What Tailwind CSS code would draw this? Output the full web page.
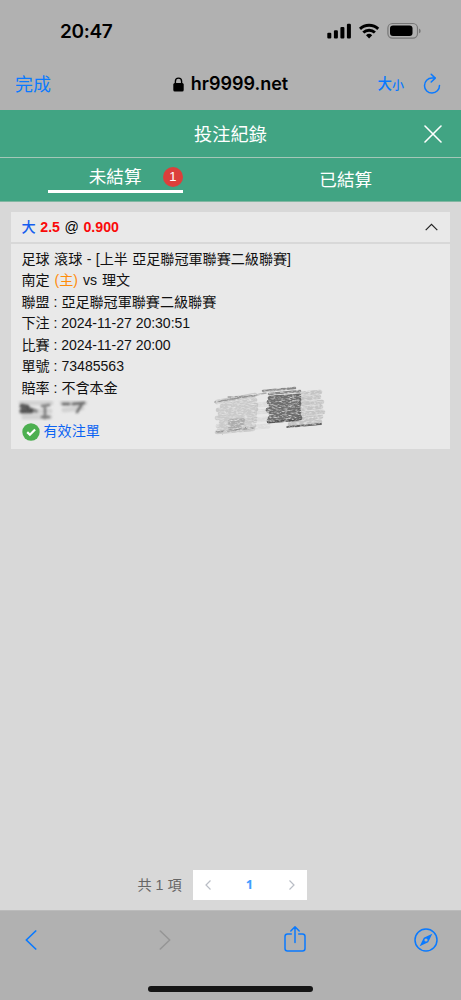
<!DOCTYPE html>
<html lang="zh-Hant">
<head>
<meta charset="utf-8">
<meta name="viewport" content="width=device-width, initial-scale=1">
<title>投注紀錄</title>
<script src="https://cdn.jsdelivr.net/npm/@tailwindcss/browser@4"></script>
</head>
<body class="flex h-[1000px] w-[461px] flex-col overflow-hidden bg-[#d8d8d8] font-['Liberation_Sans','Noto_Sans_CJK_TC',sans-serif] text-black">
<header class="h-[110px] shrink-0 bg-[#b1b1b1]">
  <div class="flex h-[62px] items-center pl-[60px] pr-[40px]">
    <span class="font-['Inter',sans-serif] text-[19px] leading-none font-semibold tracking-[-0.35px]">20:47</span>
    <svg class="ml-auto" width="94" height="18" viewBox="0 0 94 18">
      <rect x="0.3" y="10.7" width="4" height="5.8" rx="1.1"/><rect x="6.9" y="8.3" width="4" height="8.2" rx="1.1"/><rect x="13.4" y="5" width="4" height="11.5" rx="1.1"/><rect x="19.9" y="1.8" width="4" height="14.7" rx="1.1"/>
      <g fill="none" stroke="#000" stroke-width="2.9"><path d="M33 6.900a13.200 13.200 0 0 1 18.200 0"/><path d="M36.300 10.500a8.400 8.400 0 0 1 11.600 0"/></g>
      <path d="M42.100 16.500l-3.100-3.200a4.500 4.500 0 0 1 6.200 0z"/>
      <rect x="60.900" y="1.500" width="29.600" height="14.600" rx="4.600" fill="none" stroke="#777" stroke-width="1.200"/>
      <rect x="63" y="3.600" width="22.500" height="10.400" rx="3"/>
      <path d="M92 6.500v4.800q1.700-.7 1.700-2.400T92 6.500z" fill="#777"/>
    </svg>
  </div>
  <div class="grid h-[44px] grid-cols-[1fr_auto_1fr] items-center pl-[20px] pr-[20px]">
    <span class="-ml-[5px] pt-px text-[18px] leading-none text-[#0a7aff]">完成</span>
    <div class="flex items-center gap-[7px]">
      <svg width="11" height="15" viewBox="0 0 11 15"><rect x="0.300" y="6" width="10.400" height="8.500" rx="1.500"/><path d="M2.400 7V4.200a3.100 3.100 0 0 1 6.200 0V7" fill="none" stroke="#000" stroke-width="1.400"/></svg>
      <span class="font-['Inter',sans-serif] text-[18px] leading-none font-semibold">hr9999.net</span>
    </div>
    <div class="flex items-center justify-end text-[#0a7aff]">
      <span class="text-[14.500px] leading-none font-medium">大</span><span class="mt-[3px] text-[12px] leading-none font-medium">小</span>
      <svg class="ml-[19px]" width="18" height="22" viewBox="0 0 18 22" fill="none" stroke="#0a7aff" stroke-width="1.500" stroke-linecap="round" stroke-linejoin="round"><path d="M12 5.100H9a7.500 7.500 0 1 0 7.500 7.400"/><path d="M8.200 1.200l4 3.900-4 3.900"/></svg>
    </div>
  </div>
</header>

<section class="shrink-0 text-white">
  <div class="grid h-[48px] grid-cols-[1fr_auto_1fr] items-center border-b border-[#a4c7b8] bg-[#41a483] pr-[19px]">
    <h1 class="col-start-2 pt-[3px] pl-[19px] text-[18.200px] leading-none">投注紀錄</h1>
    <svg class="justify-self-end" width="18" height="18" viewBox="0 0 18 18" stroke="#fff" stroke-width="1.600" stroke-linecap="round"><path d="M1 1l16 16M17 1L1 17"/></svg>
  </div>
  <div class="grid h-[44px] grid-cols-2 border-b border-[#82b7a2] bg-[#41a483] text-[17.600px] leading-none">
    <div class="flex justify-center">
      <div class="flex h-[35px] w-[135px] items-center border-b-[3px] border-white pl-[41px]">
        <span class="pt-[7px]">未結算</span>
        <span class="mt-[5px] ml-auto flex size-5 items-center justify-center rounded-full bg-[#dc3f3b] text-[13px]">1</span>
      </div>
    </div>
    <div class="flex items-center justify-center pt-[2px]">已結算</div>
  </div>
</section>

<main class="flex grow flex-col px-[11px] pt-[10px] text-[14px]">
  <article class="relative h-[237px] bg-[#e9e9e9]">
    <div class="flex h-[32px] items-center border-b-2 border-[#d8d8d8] pr-3 pl-[10.500px] font-bold">
      <span class="text-[14.200px] leading-none whitespace-pre [word-spacing:0.6px]"><span class="font-medium text-[#155eef]">大</span> <span class="text-[#fa0a0a]">2.5</span> <span class="font-normal">@</span> <span class="text-[#fa0a0a]">0.900</span></span>
      <svg class="ml-auto" width="13" height="8" viewBox="0 0 13 8" fill="none" stroke="#222" stroke-width="1.200"><path d="M.7 7.200l5.800-5.900 5.800 5.900"/></svg>
    </div>
    <div class="pt-[5px] pl-[10.500px] text-[14.080px] leading-[21.450px] text-[#111]">
      <p class="[word-spacing:0.5px]">足球 滾球 - [上半 亞足聯冠軍聯賽二級聯賽]</p>
      <p class="[word-spacing:1px]">南定 <span class="text-[#ff8c0a]">(主)</span> vs 理文</p>
      <p>聯盟 : 亞足聯冠軍聯賽二級聯賽</p>
      <p class="tracking-[-0.04px]">下注 : 2024-11-27 20:30:51</p>
      <p class="tracking-[-0.04px]">比賽 : 2024-11-27 20:00</p>
      <p>單號 : 73485563</p>
      <p>賠率 : 不含本金</p>
      <div class="h-[22px]"></div>
      <p class="flex items-center gap-1 text-[#0b63f3]">
        <svg width="18" height="18" viewBox="0 0 18 18"><circle cx="9" cy="9" r="8.700" fill="#4caf50"/><path d="M5.200 9.100l2.700 2.700 5.200-5.300" fill="none" stroke="#fff" stroke-width="2.200"/></svg>
        有效注單
      </p>
    </div>
    <svg class="pointer-events-none absolute top-0 left-0" width="439" height="237" viewBox="11 212 439 237" fill="none" stroke-linecap="round">
      <defs>
        <filter id="pencil" x="-10%" y="-10%" width="120%" height="120%" color-interpolation-filters="sRGB"><feTurbulence type="fractalNoise" baseFrequency="0.25 0.7" numOctaves="3" seed="4" result="n"/><feDisplacementMap in="SourceGraphic" in2="n" scale="1.500" xChannelSelector="R" yChannelSelector="G" result="d"/><feColorMatrix in="n" type="matrix" values="0 0 0 0 0  0 0 0 0 0  0 0 0 0 0  0 0 0 2.200 -0.250" result="m"/><feComposite in="d" in2="m" operator="in"/><feGaussianBlur stdDeviation="0.550 0.300"/></filter>
        <filter id="smudge" x="-20%" y="-20%" width="140%" height="140%"><feGaussianBlur stdDeviation="1.100"/></filter>
      </defs>
      <g filter="url(#pencil)">
        <path d="M217 402l38-7M222 406l33-6M218 410l38-5M220 414l36-5M217 418l38-5M221 422l34-5M218 426l37-5M219 430l35-4M217 432l36-3" stroke="#888" stroke-opacity=".32" stroke-width="4.600"/>
        <path d="M215 402l41-7 10-2M228 397l26-1M217 432l36-4" stroke="#555" stroke-opacity=".45" stroke-width="1.500"/>
        <path d="M230 421l13-1M230 424l13-1M230 428l10-1" stroke="#666" stroke-opacity=".3" stroke-width="4"/>
        <path d="M255 405l14-1M256 412l14-1M254 420l14-1M256 427l12-1" stroke="#aaa" stroke-opacity=".2" stroke-width="5"/>
        <path d="M298 394l22-2M300 399l19-2M299 404l23-2M300 409l21-2M299 414l24-2M300 419l21-2M290 424l30-2" stroke="#888" stroke-opacity=".38" stroke-width="4.600"/>
        <path d="M263 391l32-3M269 394l31-3" stroke="#555" stroke-opacity=".65" stroke-width="2.500"/>
        <path d="M270 398l29-2M269 402l30-2M271 406l28-2M268 410l31-2M271 414l28-2M270 418l29-2M269 421l31-3" stroke="#444" stroke-opacity=".75" stroke-width="4.800"/>
        <path d="M268 422l32-2M287 427l34-3" stroke="#444" stroke-opacity=".8" stroke-width="1.800"/>
      </g>
      <g filter="url(#smudge)">
        <path d="M21 403h30M21 412l29-1M24 417h26M62 403h23M64 410l18-2" stroke="#aaa" stroke-opacity=".35" stroke-width="5"/>
        <path d="M22 406l5 1M22 411h9" stroke="#222" stroke-opacity=".7" stroke-width="5"/>
        <path d="M28 408l8 3" stroke="#444" stroke-opacity=".5" stroke-width="4"/>
        <path d="M42 406l7-1M45 406v12M42 417h7" stroke="#333" stroke-opacity=".5" stroke-width="3"/>
        <path d="M63 404h6M73 404l11-1M82 404l-5 8" stroke="#333" stroke-opacity=".6" stroke-width="3"/>
      </g>
    </svg>
  </article>

  <nav class="mt-auto mb-[10px] flex items-center justify-center gap-[11px] pr-[17px] text-[#666]">
    <span class="text-[14.200px] leading-none">共 1 項</span>
    <div class="flex h-[30px] w-[114px] items-center justify-between bg-white px-[12px]">
      <svg width="6" height="10" viewBox="0 0 6 10" fill="none" stroke="#b9bdc5" stroke-width="1.200"><path d="M5.500.5L1 5l4.500 4.500"/></svg>
      <b class="font-['Noto_Sans',sans-serif] text-[13px] text-[#409eff]">1</b>
      <svg width="6" height="10" viewBox="0 0 6 10" fill="none" stroke="#b9bdc5" stroke-width="1.200"><path d="M.5.5L5 5 .5 9.500"/></svg>
    </div>
  </nav>
</main>

<footer class="flex h-[90px] shrink-0 flex-col border-t border-[#bbb] bg-[#b1b1b1]">
  <div class="flex h-[58px] items-center pr-[23px] pl-[25px]">
    <svg width="12" height="20" viewBox="0 0 12 20" fill="none" stroke="#0a7aff" stroke-width="1.700" stroke-linecap="round" stroke-linejoin="round"><path d="M10.700 1L1.300 10l9.400 9"/></svg>
    <svg class="ml-[122px]" width="12" height="20" viewBox="0 0 12 20" fill="none" stroke="#969696" stroke-width="1.600" stroke-linecap="round" stroke-linejoin="round"><path d="M1.300 1l9.400 9-9.400 9"/></svg>
    <svg class="mb-[2px] ml-[112.500px]" width="22" height="28" viewBox="0 0 22 28" fill="none" stroke="#0a7aff" stroke-width="1.500" stroke-linecap="round" stroke-linejoin="round"><path d="M7.300 9H3.500Q1 9 1 11.500v12Q1 26 3.500 26h15q2.500 0 2.500-2.500v-12Q21 9 18.500 9h-3.800M11 17.500V1.800M6.800 6L11 1.800 15.200 6"/></svg>
    <svg class="ml-auto" width="24" height="24" viewBox="0 0 24 24"><circle cx="12" cy="12" r="11" fill="none" stroke="#0a7aff" stroke-width="1.500"/><path fill="#0a7aff" fill-rule="evenodd" d="M18.300 5.700L14.200 14.200 5.700 18.300 9.800 9.800zM12 10.400a1.600 1.600 0 1 0 0 3.200 1.600 1.600 0 0 0 0-3.200z"/></svg>
  </div>
  <div class="mt-[17px] ml-[148px] h-[6px] w-[165px] shrink-0 rounded-full bg-[#151515]"></div>
</footer>
</body>
</html>
